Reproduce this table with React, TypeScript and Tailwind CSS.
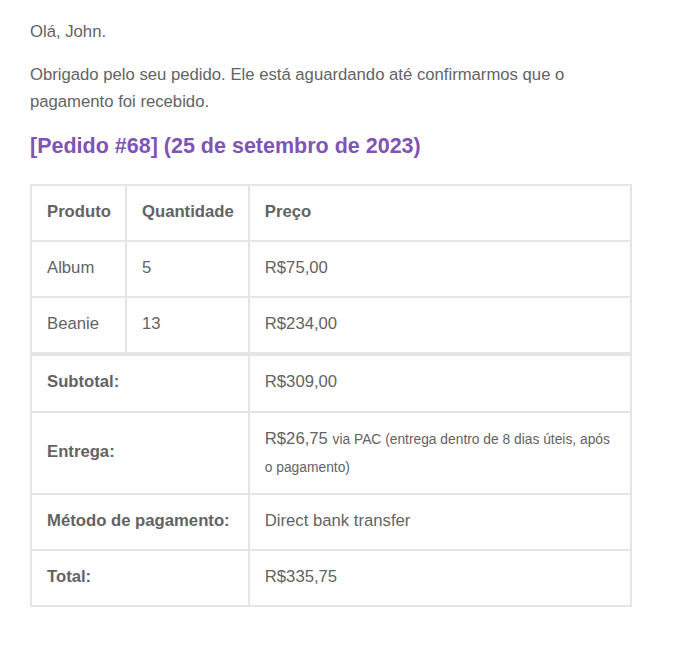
import React from "react";

const items = [
  { name: "Album", qty: "5", price: "R$75,00" },
  { name: "Beanie", qty: "13", price: "R$234,00" },
];

const cell = "border border-[#e5e5e5] pl-[15px] pr-[14px] pt-[12px] pb-[14px] text-left align-middle leading-[28px]";
const subCell = "border border-t-[3px] border-[#e5e5e5] pl-[15px] pr-[14px] pt-[12px] pb-[15px] text-left align-middle leading-[28px]";

export default function App() {
  return (
    <div
      className="min-h-screen bg-white pt-[18px] pl-[30px] text-[16.7px] leading-[27px] text-[#636363]"
      style={{ fontFamily: '"Liberation Sans", Helvetica, Arial, sans-serif' }}
    >
      <div className="w-[602px]">
        <p className="mb-4">Olá, John.</p>
        <p className="mb-4">
          Obrigado pelo seu pedido. Ele está aguardando até confirmarmos que o pagamento foi recebido.
        </p>
        <h2 className="mb-[23px] text-[21.5px] font-bold leading-[30px] text-[#7f54b3]">
          [Pedido #68] (25 de setembro de 2023)
        </h2>

        <table className="w-full border-separate border-spacing-0 border border-[#e5e5e5]">
          <thead>
            <tr>
              <th className={`${cell} font-bold`}>Produto</th>
              <th className={`${cell} font-bold`}>Quantidade</th>
              <th className={`${cell} font-bold`}>Preço</th>
            </tr>
          </thead>
          <tbody>
            {items.map((it) => (
              <tr key={it.name}>
                <td className={cell}>{it.name}</td>
                <td className={cell}>{it.qty}</td>
                <td className={cell}>{it.price}</td>
              </tr>
            ))}
          </tbody>
          <tfoot>
            <tr>
              <th colSpan={2} className={`${subCell} font-bold`}>
                Subtotal:
              </th>
              <td className={subCell}>R$309,00</td>
            </tr>
            <tr>
              <th colSpan={2} className={`${cell} font-bold`}>
                Entrega:
              </th>
              <td className="border border-[#e5e5e5] pl-[15px] pr-[14px] pt-[12px] pb-[12px] text-left align-middle leading-[27px]">
                R$26,75{" "}
                <small className="text-[13.8px] leading-[27px]">
                  via PAC (entrega dentro de 8 dias úteis, após o pagamento)
                </small>
              </td>
            </tr>
            <tr>
              <th colSpan={2} className={`${cell} font-bold`}>
                Método de pagamento:
              </th>
              <td className={cell}>Direct bank transfer</td>
            </tr>
            <tr>
              <th colSpan={2} className={`${cell} font-bold`}>
                Total:
              </th>
              <td className={cell}>R$335,75</td>
            </tr>
          </tfoot>
        </table>
      </div>
    </div>
  );
}
